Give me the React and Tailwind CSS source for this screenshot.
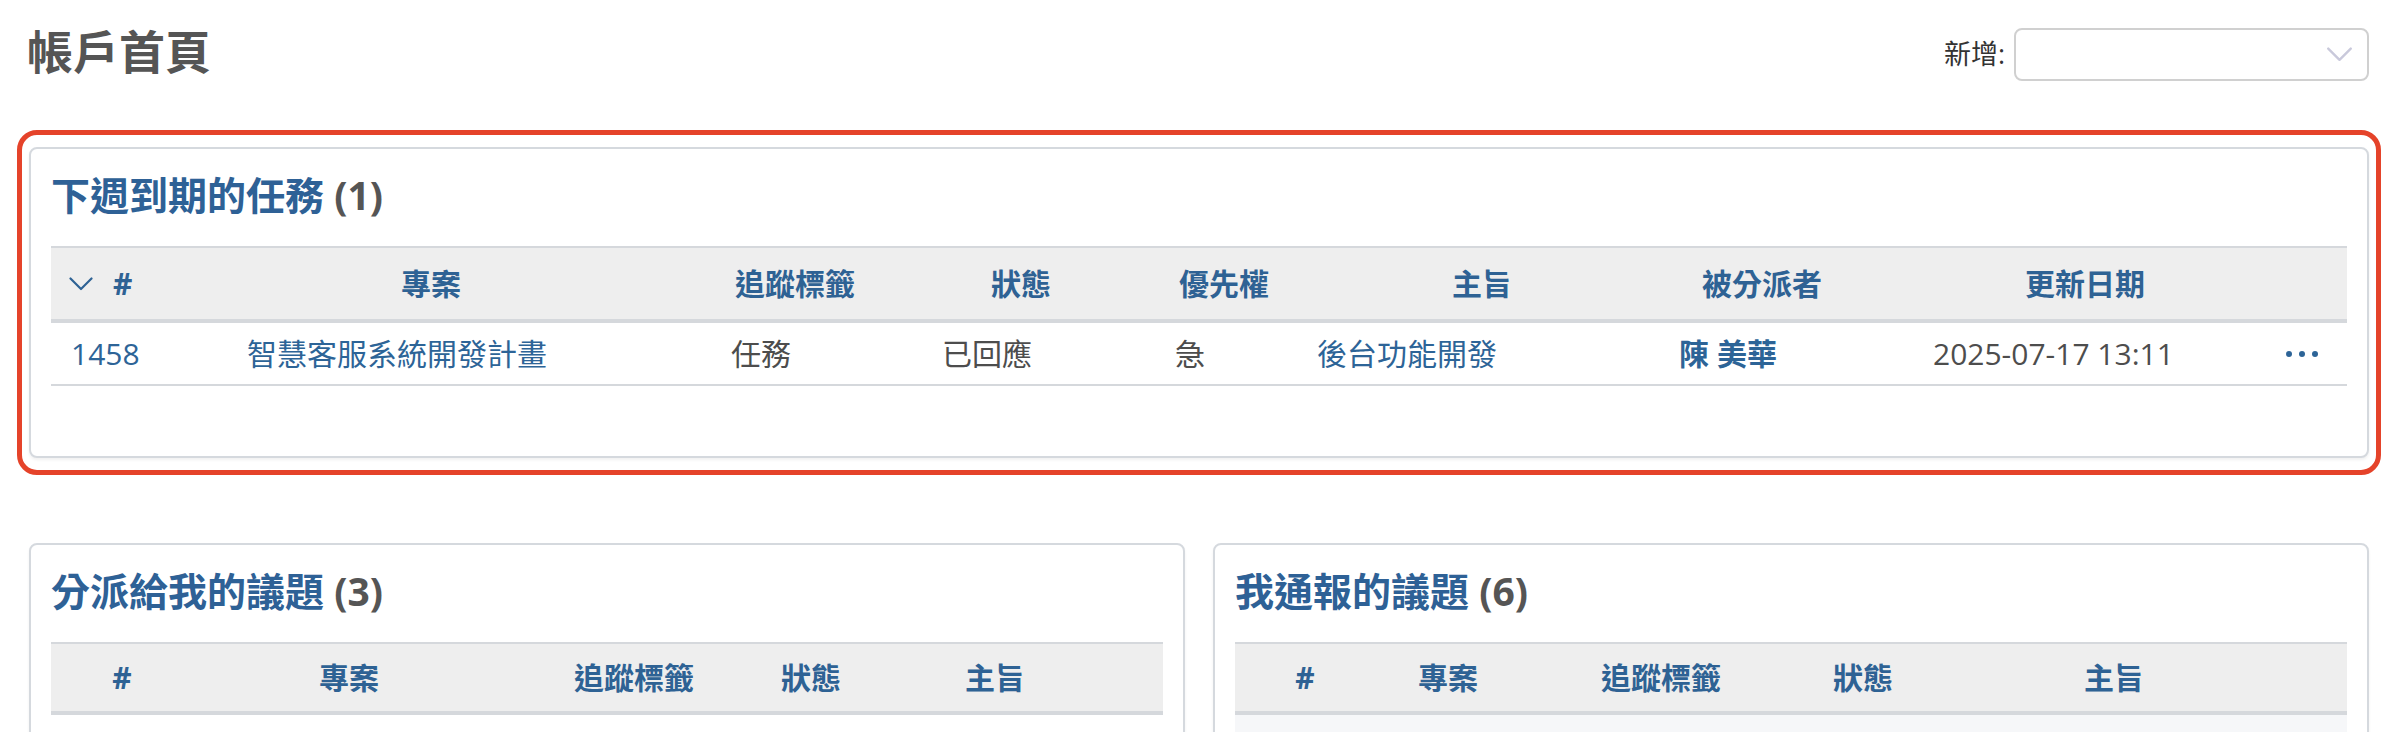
import React from 'react';

const font = "font-['Open_Sans','Noto_Sans_CJK_TC',sans-serif]";

function Chevron({ className }) {
  return (
    <svg viewBox="0 0 24 14" className={className} fill="none" stroke="currentColor" strokeWidth="2.2" strokeLinecap="round" strokeLinejoin="round">
      <path d="M1.5 1.5 L12 12 L22.5 1.5" />
    </svg>
  );
}

function Dots() {
  return (
    <div className="flex items-center gap-[7px]">
      <span className="w-[6px] h-[6px] rounded-full bg-[#2d6497]" />
      <span className="w-[6px] h-[6px] rounded-full bg-[#2d6497]" />
      <span className="w-[6px] h-[6px] rounded-full bg-[#2d6497]" />
    </div>
  );
}

function Card({ title, count, children, className = '' }) {
  return (
    <div className={`bg-white border-2 border-[#d5d9de] rounded-[8px] shadow-[0_2px_3px_rgba(0,0,0,0.06)] px-[20px] pt-[26px] ${className}`}>
      <h3 className="text-[39px] font-bold leading-none text-[#2e6196] mb-[32px] whitespace-nowrap">
        {title} <span className="text-[#555]">({count})</span>
      </h3>
      {children}
    </div>
  );
}

function App() {
  const th = 'text-center pl-[68px] whitespace-nowrap';
  const td = 'text-center whitespace-nowrap';

  return (
    <div className={`${font} bg-white min-h-screen pl-[29px] pr-[31px] pt-[28px]`}>
      {/* 標題列 */}
      <div className="flex justify-between items-start">
        <h2 className="text-[46px] font-bold leading-none text-[#555] -ml-[2px]">帳戶首頁</h2>
        <div className="flex items-center gap-[9px]">
          <span className="text-[27px] text-[#333]">新增:</span>
          <div className="w-[355px] h-[53px] border-2 border-[#d0d0d0] rounded-[8px] flex items-center justify-end pr-[14px]">
            <Chevron className="w-[27px] h-[15px] text-[#c9c9db]" />
          </div>
        </div>
      </div>

      {/* 下週到期的任務 */}
      <div className="mt-[49px] -mx-[12px] border-[5px] border-[#e5432a] rounded-[20px] px-[7px] py-[12px]">
        <Card title="下週到期的任務" count={1} className="pb-[70px]">
          <div className="text-[30px]">
            <div className="grid grid-cols-[106px_480px_248px_204px_202px_232px_410px_236px_1fr] items-center h-[77px] bg-[#eeeeee] border-t-2 border-b-4 border-[#d5d8dc] font-bold text-[#2e6294]">
              <div className="flex items-center gap-[20px] pl-[18px]">
                <Chevron className="w-[24px] h-[14px]" />
                <span>#</span>
              </div>
              <div className={th}>專案</div>
              <div className={th}>追蹤標籤</div>
              <div className={th}>狀態</div>
              <div className={th}>優先權</div>
              <div className="text-center pl-[150px] whitespace-nowrap">主旨</div>
              <div className={th}>被分派者</div>
              <div className={th}>更新日期</div>
              <div />
            </div>
            <div className="grid grid-cols-[106px_480px_248px_204px_202px_232px_410px_236px_1fr] items-center h-[63px] border-b-2 border-[#d5d8dc] text-[#4d4d4d]">
              <div className="pl-[20px] text-[#2d6497]">1458</div>
              <div className={`${td} text-[#2d6497]`}>智慧客服系統開發計畫</div>
              <div className={td}>任務</div>
              <div className={td}>已回應</div>
              <div className={td}>急</div>
              <div className={`${td} text-[#2d6497]`}>後台功能開發</div>
              <div className={`${td} text-[#2d6497] font-bold`}>陳 美華</div>
              <div className={td}>2025-07-17 13:11</div>
              <div className="flex justify-end pr-[29px]">
                <Dots />
              </div>
            </div>
          </div>
        </Card>
      </div>

      {/* 下方兩欄 */}
      <div className="grid grid-cols-2 gap-[28px] mt-[68px]">
        <Card title="分派給我的議題" count={3} className="pb-[40px]">
          <div className="text-[30px]">
            <div className="grid grid-cols-[142px_312px_258px_96px_272px_1fr] items-center h-[73px] bg-[#eeeeee] border-t-2 border-b-4 border-[#d5d8dc] font-bold text-[#2e6294]">
              <div className="text-center">#</div>
              <div className="text-center">專案</div>
              <div className="text-center whitespace-nowrap">追蹤標籤</div>
              <div className="text-center">狀態</div>
              <div className="text-center">主旨</div>
              <div />
            </div>
            <div className="h-[63px] border-b-2 border-[#d5d8dc]" />
          </div>
        </Card>
        <Card title="我通報的議題" count={6} className="pb-[40px]">
          <div className="text-[30px]">
            <div className="grid grid-cols-[140px_146px_280px_124px_378px_1fr] items-center h-[73px] bg-[#eeeeee] border-t-2 border-b-4 border-[#d5d8dc] font-bold text-[#2e6294]">
              <div className="text-center">#</div>
              <div className="text-center">專案</div>
              <div className="text-center whitespace-nowrap">追蹤標籤</div>
              <div className="text-center">狀態</div>
              <div className="text-center">主旨</div>
              <div />
            </div>
            <div className="h-[63px] bg-[#f6f7f9] border-b-2 border-[#d5d8dc]" />
          </div>
        </Card>
      </div>
    </div>
  );
}

export default App;
